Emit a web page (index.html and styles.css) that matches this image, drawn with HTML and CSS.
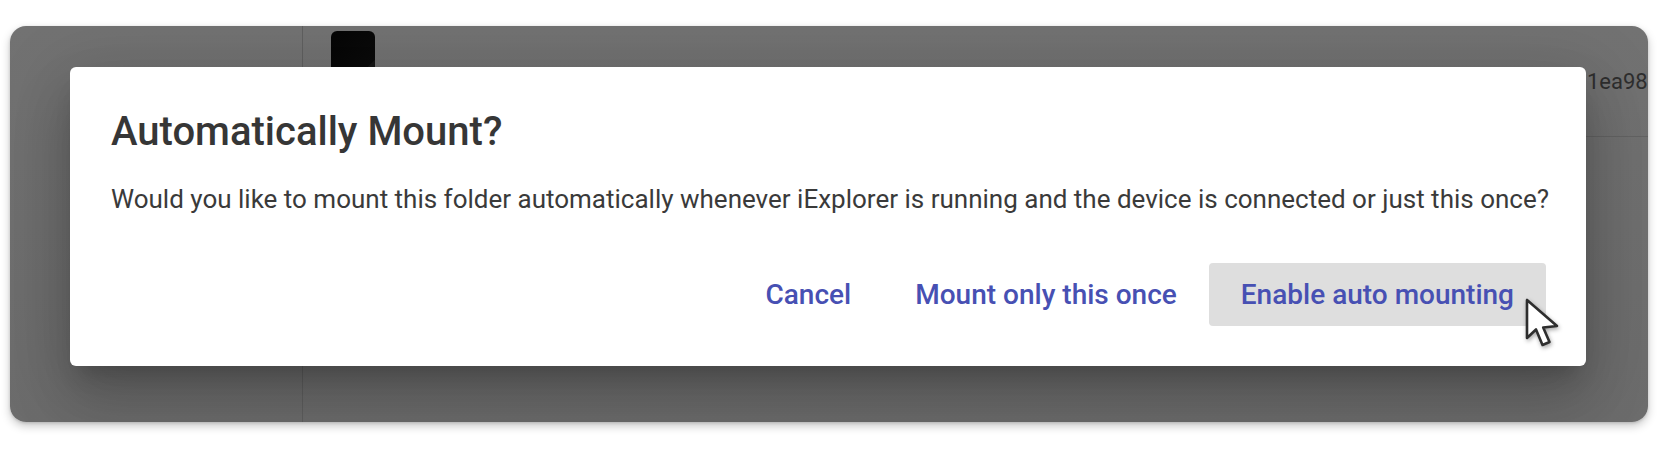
FILE: index.html
```html
<!DOCTYPE html>
<html lang="en">
<head>
<meta charset="utf-8">
<title>Automatically Mount?</title>
<link rel="stylesheet" href="styles.css">
</head>
<body>
<div class="stage">
  <div class="window">
    <aside class="sidebar"></aside>
    <section class="main">
      <div class="device-row">
        <div class="phone"></div>
        <div class="device-text">
          <span class="col name">Bob's iPhone 8 Plus</span>
          <span class="col model">iPhone 8 Plus &middot; iOS 14.2 &middot; 256 GB</span>
          <span class="col udid">1ea98c7d2f4b6a0e</span>
        </div>
      </div>
    </section>

    <div class="dialog" role="dialog" aria-labelledby="dlg-title">
      <h2 class="dialog-title" id="dlg-title">Automatically Mount?</h2>
      <p class="dialog-body">Would you like to mount this folder automatically whenever iExplorer is running and the device is connected or just this once?</p>
      <div class="dialog-actions">
        <button class="btn">Cancel</button>
        <button class="btn">Mount only this once</button>
        <button class="btn btn-hover">Enable auto mounting</button>
      </div>
    </div>
  </div>

  <svg class="cursor" width="40" height="56" viewBox="0 0 40 56" aria-hidden="true">
    <path d="M3 3 L3 41 L12 32.5 L18.5 48 L25.5 45 L19.2 30.5 L33 29 Z" fill="#ffffff" stroke="#2e2e2e" stroke-width="2.6" stroke-linejoin="round"/>
  </svg>
</div>
</body>
</html>
```
FILE: styles.css
```css
* { box-sizing: border-box; }

html, body {
  margin: 0;
  padding: 0;
  background: #ffffff;
  font-family: Roboto, "Noto Sans", "Liberation Sans", sans-serif;
}

.stage {
  position: relative;
  width: 1658px;
  height: 454px;
  padding: 26px 10px 0 10px;
}

.window {
  position: relative;
  height: 396px;
  border-radius: 16px;
  overflow: hidden;
  display: flex;
  background: linear-gradient(#727272, #6c6c6c);
  box-shadow: 0 4px 10px rgba(0, 0, 0, 0.22), 0 1px 3px rgba(0, 0, 0, 0.15);
}

.sidebar {
  width: 293px;
  flex: none;
  border-right: 1px solid #5f5f5f;
}

.main {
  flex: 1;
  min-width: 0;
  display: flex;
  flex-direction: column;
}

.device-row {
  height: 111px;
  flex: none;
  display: flex;
  align-items: center;
  gap: 30px;
  padding-left: 28px;
  border-bottom: 1px solid #636363;
  overflow: hidden;
}

.phone {
  width: 44px;
  height: 100px;
  flex: none;
  border-radius: 6px;
  background: linear-gradient(135deg, #050505 0%, #0b0b0b 50%, #161616 51%, #0a0a0a 100%);
}

.device-text {
  display: flex;
  align-items: center;
  white-space: nowrap;
  font-size: 22px;
  color: #2e2e2e;
}

.col { flex: none; overflow: hidden; }
.col.name { width: 560px; }
.col.model { width: 622px; }

.dialog {
  position: absolute;
  left: 60px;
  top: 41px;
  width: 1516px;
  background: #ffffff;
  border-radius: 6px;
  padding: 41px 40px 40px 41px;
  box-shadow:
    0 16px 22px -10px rgba(0, 0, 0, 0.2),
    0 36px 57px 4px rgba(0, 0, 0, 0.14),
    0 14px 69px 12px rgba(0, 0, 0, 0.12);
}

.dialog-title {
  margin: 0;
  font-size: 40px;
  line-height: 48px;
  font-weight: 500;
  color: #363636;
}

.dialog-body {
  margin: 25px 0 0 0;
  font-size: 26px;
  line-height: 36px;
  white-space: nowrap;
  color: #3a3a3a;
}

.dialog-actions {
  margin-top: 46px;
  display: flex;
  justify-content: flex-end;
}

.btn {
  height: 63px;
  padding: 0 32px;
  border: 0;
  border-radius: 4px;
  background: transparent;
  font-family: Roboto, "Noto Sans", "Liberation Sans", sans-serif;
  font-size: 28px;
  font-weight: 500;
  color: #4750b3;
}

.btn-hover { background: #dedede; }

.cursor {
  position: absolute;
  left: 1524px;
  top: 297px;
  filter: drop-shadow(1px 2px 2px rgba(0, 0, 0, 0.35));
}
```
